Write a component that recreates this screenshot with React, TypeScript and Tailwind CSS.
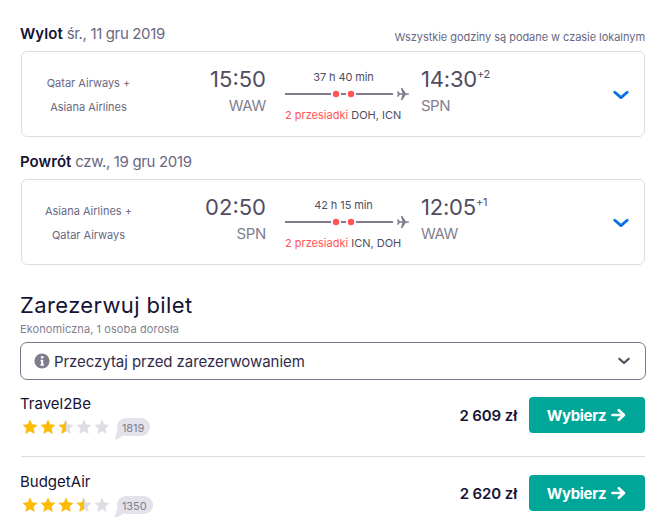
interface Leg {
  title: string;
  date: string;
  note?: string;
  airlines: string[];
  departure: string;
  from: string;
  duration: string;
  via: string;
  arrival: string;
  offset: string;
  to: string;
}

interface Offer {
  name: string;
  rating: number;
  reviews: number;
  price: string;
}

const legs: Leg[] = [
  {
    title: 'Wylot',
    date: 'śr., 11 gru 2019',
    note: 'Wszystkie godziny są podane w czasie lokalnym',
    airlines: ['Qatar Airways +', 'Asiana Airlines'],
    departure: '15:50',
    from: 'WAW',
    duration: '37 h 40 min',
    via: 'DOH, ICN',
    arrival: '14:30',
    offset: '+2',
    to: 'SPN',
  },
  {
    title: 'Powrót',
    date: 'czw., 19 gru 2019',
    airlines: ['Asiana Airlines +', 'Qatar Airways'],
    departure: '02:50',
    from: 'SPN',
    duration: '42 h 15 min',
    via: 'ICN, DOH',
    arrival: '12:05',
    offset: '+1',
    to: 'WAW',
  },
];

const offers: Offer[] = [
  { name: 'Travel2Be', rating: 2.5, reviews: 1819, price: '2 609 zł' },
  { name: 'BudgetAir', rating: 3.5, reviews: 1350, price: '2 620 zł' },
];

const STAR = 'M8 1.2l1.9 4.5 4.9.5-3.7 3.3 1.1 4.8L8 11.8l-4.2 2.5 1.1-4.8L1.2 6.2 6.1 5.7z';

function Star({ fill }: { fill: number }) {
  return (
    <svg viewBox="0 0 16 16" className="h-4 w-4" strokeLinejoin="round">
      <path d={STAR} fill="#dddde5" stroke="#dddde5" strokeWidth=".7" />
      {fill > 0 && (
        <path
          d={STAR}
          fill="#ffbb00"
          stroke="#ffbb00"
          strokeWidth=".7"
          style={{ clipPath: `inset(0 ${(1 - fill) * 100}% 0 0)` }}
        />
      )}
    </svg>
  );
}

function Chevron({ className }: { className: string }) {
  return (
    <svg viewBox="0 0 16 10" className={className} fill="none" stroke="currentColor" strokeWidth="2.8" strokeLinecap="round" strokeLinejoin="round">
      <path d="M1.8 2.2L8 7.6l6.2-5.4" />
    </svg>
  );
}

function Route() {
  return (
    <svg viewBox="0 0 125 14" className="block h-[14px] w-[125px]">
      <path d="M0 7h46M56 7h5M71 7h37" stroke="#817b8f" strokeWidth="2" />
      <circle cx="51" cy="7" r="3.2" fill="#ff5452" />
      <circle cx="66" cy="7" r="3.2" fill="#ff5452" />
      <path
        fill="#817b8f"
        d="M112 4.2h1.2l1.7 2h2.5L115.8 1h1.5l3.5 5.2h2.2c.7 0 1 .4 1 .8s-.3.8-1 .8h-2.2L117.3 13h-1.5l1.6-5.2h-2.5l-1.7 2H112l.8-2.8z"
      />
    </svg>
  );
}

function LegSection({ leg }: { leg: Leg }) {
  return (
    <section>
      <div className="flex h-[27px] items-start justify-between whitespace-nowrap">
        <h2 className="-ml-px pt-px text-[15px] leading-[18px] tracking-[-0.35px] text-[#696880]">
          <span className="font-semibold tracking-[0.05px] text-[#151334]">{leg.title}</span> {leg.date}
        </h2>
        {leg.note && <p className="mt-[4px] text-[11px] leading-[18px] tracking-[-0.05px] text-[#696880]">{leg.note}</p>}
      </div>
      <div className="flex h-[86px] rounded-md border border-[#dddde5] bg-white whitespace-nowrap">
        <div className="mt-[19px] w-[133px] text-center text-[11px] leading-6 text-[#696880]">
          {leg.airlines.map((airline) => (
            <p key={airline}>{airline}</p>
          ))}
        </div>
        <div className="mt-[13px] w-[111px] text-right">
          <p className="text-[22px] leading-[28px] text-[#524c61]">{leg.departure}</p>
          <p className="pt-px text-[15px] leading-[24px] tracking-[-0.3px] text-[#82808f]">{leg.from}</p>
        </div>
        <div className="mt-[16px] ml-[19px] w-[125px] text-[11px] leading-[18px] text-[#524c61]">
          <p className="mb-px w-[117px] text-center tracking-[-0.1px]">{leg.duration}</p>
          <Route />
          <p className="mt-[5px]">
            <span className="text-[#ff5452]">2 przesiadki</span> {leg.via}
          </p>
        </div>
        <div className="mt-[13px] ml-[11px] flex-1">
          <div className="flex text-[#524c61]">
            <p className="text-[22px] leading-[28px] tracking-[-0.2px]">{leg.arrival}</p>
            <sup className="top-0 text-[11px] leading-[18px] tracking-[-0.3px]">{leg.offset}</sup>
          </div>
          <p className="pt-px text-[15px] leading-[24px] tracking-[-0.5px] text-[#82808f]">{leg.to}</p>
        </div>
        <button className="mr-[15px] pt-px text-[#0770e3]" aria-label="Szczegóły">
          <Chevron className="h-[10px] w-4" />
        </button>
      </div>
    </section>
  );
}

function OfferRow({ offer }: { offer: Offer }) {
  return (
    <div className="flex h-[77px] items-start whitespace-nowrap">
      <div className="flex-1">
        <h3 className="mt-[-3px] -ml-px text-[15px] leading-5 text-[#151334]">{offer.name}</h3>
        <div className="mt-[4px] flex items-start">
          <div className="mt-px ml-[1px] flex gap-[2px]">
            {[0, 1, 2, 3, 4].map((i) => (
              <Star key={i} fill={Math.max(0, Math.min(1, offer.rating - i))} />
            ))}
          </div>
          <div className="relative ml-[7px] h-[18px] rounded-[9px] bg-[#e3e2ea] pr-[6px] pl-[5px] text-[11px] leading-[20px] tracking-[-0.1px] text-[#817e90]">
            <svg viewBox="0 0 8 9" className="absolute top-[13px] left-[-2px] h-[9px] w-2" fill="#e3e2ea">
              <path d="M2 0L0 7.5Q0 9 1.5 8.5L8 5V0z" />
            </svg>
            <span className="relative">{offer.reviews}</span>
          </div>
        </div>
      </div>
      <p className="mr-3 pt-px text-[15px] leading-9 font-semibold tracking-[-0.1px] text-[#151334]">{offer.price}</p>
      <button className="flex h-9 w-[116px] items-center justify-center rounded-[4px] bg-[#00a698] text-[15px] font-bold text-white">
        <span className="pt-[2px] tracking-[-0.35px]">Wybierz</span>
        <svg viewBox="0 0 15 14" className="mr-px ml-[5px] h-[14px] w-[15px]" fill="none" stroke="currentColor" strokeWidth="2.6" strokeLinecap="round" strokeLinejoin="round">
          <path d="M1.5 7h11M7.8 2.2L13 7l-5.2 4.8" />
        </svg>
      </button>
    </div>
  );
}

export default function App() {
  return (
    <main className="h-[532px] w-[667px] overflow-hidden bg-white pt-6 pr-[22px] pl-[21px] font-['Inter',sans-serif]">
      <div className="flex flex-col gap-[15px]">
        {legs.map((leg) => (
          <LegSection key={leg.title} leg={leg} />
        ))}
      </div>
      <h1 className="mt-[26px] -ml-px text-[22px] leading-[28px] tracking-[0.38px] text-[#151334]">Zarezerwuj bilet</h1>
      <p className="mt-[1px] -ml-px text-[11px] leading-[18px] tracking-[0.08px] text-[#82808f]">Ekonomiczna, 1 osoba dorosła</p>
      <button className="mx-[-1px] mt-[4px] flex h-[38px] w-[626px] items-center rounded-[7px] border border-[#7b788d] pr-[15px] pl-[13px] text-[15px] text-[#302b4b]">
        <svg viewBox="0 0 16 16" className="mr-1 h-4 w-4">
          <circle cx="8" cy="8" r="7.6" fill="#817b8f" />
          <path d="M6.5 7.5H8.2V12M6.5 12H10" stroke="white" strokeWidth="1.5" fill="none" />
          <path d="M8.2 7v5" stroke="white" strokeWidth="2" />
          <circle cx="8.2" cy="4.2" r="1.3" fill="white" />
        </svg>
        <span className="flex-1 pt-[2px] text-left tracking-[-0.06px]">Przeczytaj przed zarezerwowaniem</span>
        <Chevron className="h-2 w-3 text-[#524c61]" />
      </button>
      <div className="mt-[17px] flex flex-col">
        <OfferRow offer={offers[0]} />
        <div className="-mt-[18px] mb-[18px] border-t border-[#dddde5]" />
        <OfferRow offer={offers[1]} />
      </div>
    </main>
  );
}
